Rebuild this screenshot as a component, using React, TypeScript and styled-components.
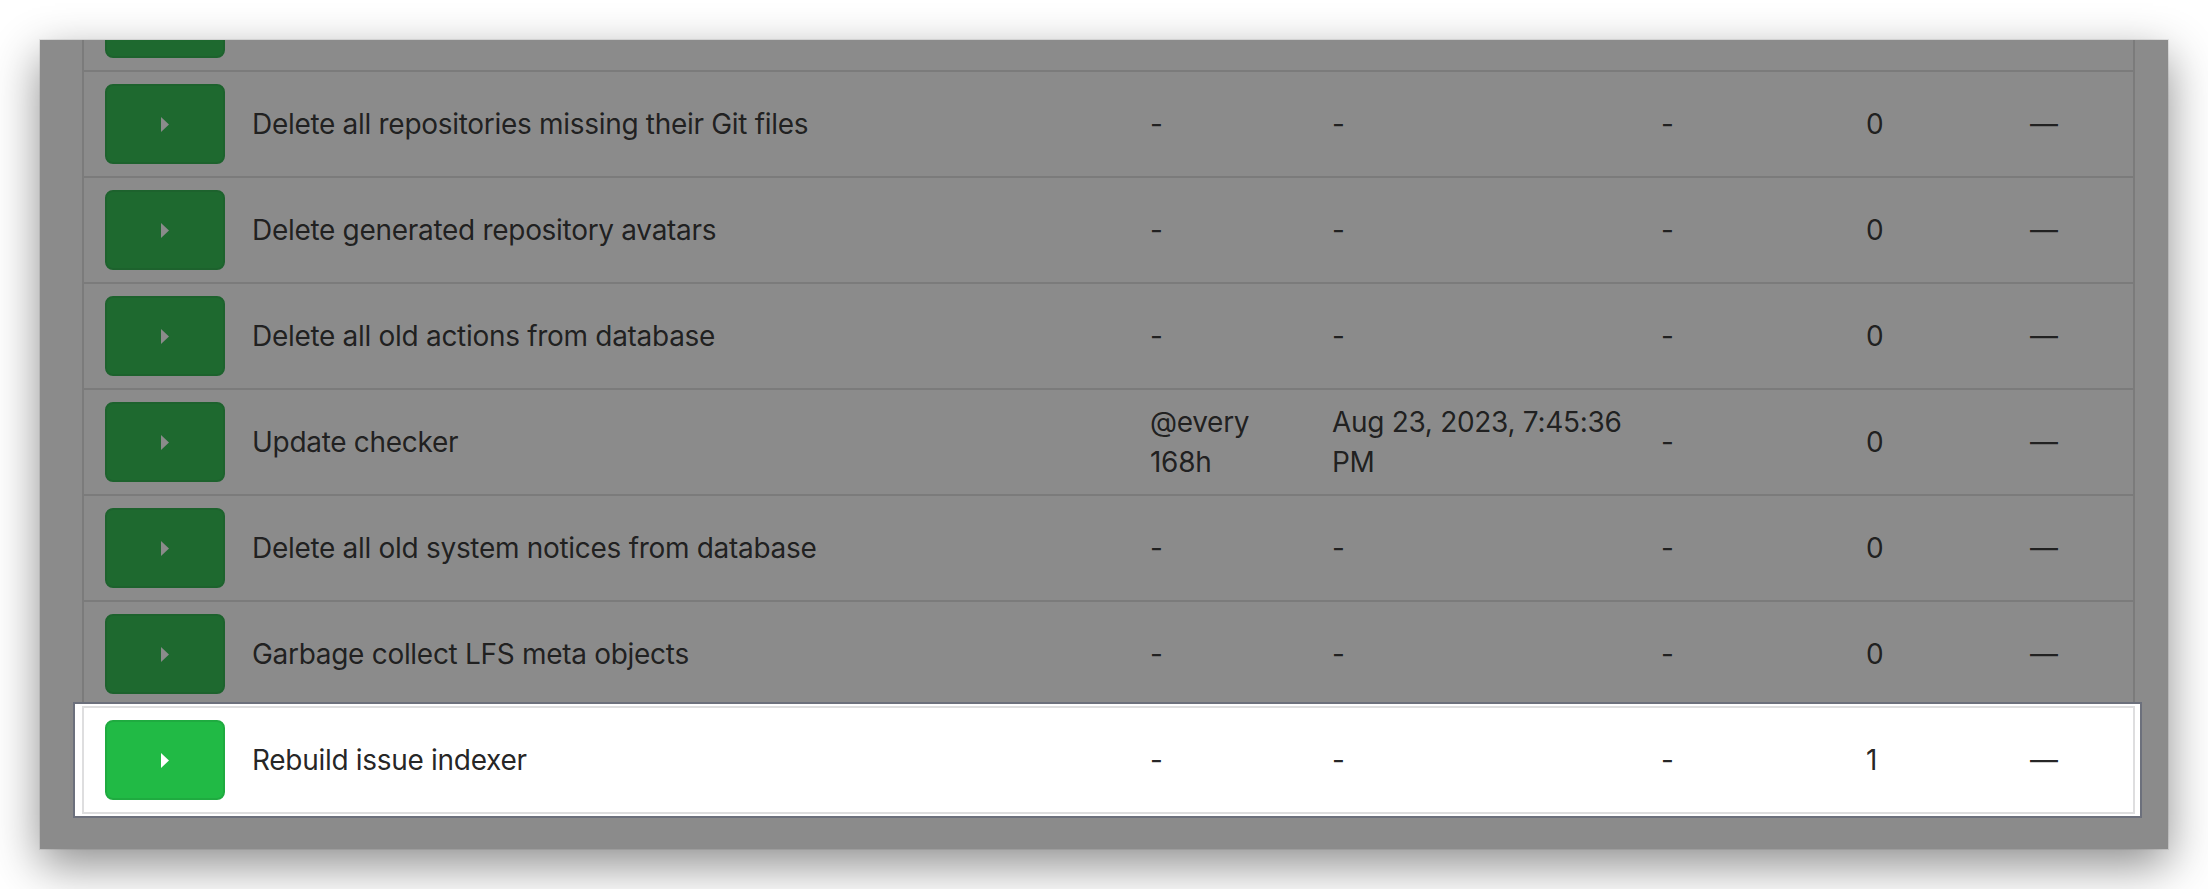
import React from 'react';
import { styled, createGlobalStyle } from 'styled-components';

type Task = {
  name: string;
  schedule: string;
  next: string;
  prev: string;
  execTimes: string;
  last: string;
};

// first row is scrolled mostly out of view, only its button shows
const tasks: Task[] = [
  { name: '', schedule: '', next: '', prev: '', execTimes: '', last: '' },
  { name: 'Delete all repositories missing their Git files', schedule: '-', next: '-', prev: '-', execTimes: '0', last: '—' },
  { name: 'Delete generated repository avatars', schedule: '-', next: '-', prev: '-', execTimes: '0', last: '—' },
  { name: 'Delete all old actions from database', schedule: '-', next: '-', prev: '-', execTimes: '0', last: '—' },
  { name: 'Update checker', schedule: '@every 168h', next: 'Aug 23, 2023, 7:45:36 PM', prev: '-', execTimes: '0', last: '—' },
  { name: 'Delete all old system notices from database', schedule: '-', next: '-', prev: '-', execTimes: '0', last: '—' },
  { name: 'Garbage collect LFS meta objects', schedule: '-', next: '-', prev: '-', execTimes: '0', last: '—' },
];

const highlighted: Task = {
  name: 'Rebuild issue indexer',
  schedule: '-',
  next: '-',
  prev: '-',
  execTimes: '1',
  last: '—',
};

function TaskRow({ task, last }: { task: Task; last?: boolean }) {
  return (
    <Row $last={last}>
      <RunButton type="button" aria-label="Run task">
        <svg width="8" height="15" viewBox="0 0 8 15">
          <polygon points="0,0 8,7.5 0,15" fill="#fff" />
        </svg>
      </RunButton>
      <Cell>{task.name}</Cell>
      <Cell>{task.schedule}</Cell>
      <Cell>{task.next}</Cell>
      <Cell>{task.prev}</Cell>
      <Cell>{task.execTimes}</Cell>
      <Cell>{task.last}</Cell>
    </Row>
  );
}

export default function App() {
  return (
    <>
      <GlobalStyle />
      <Window>
        <Table>
          {tasks.map((task, i) => (
            <TaskRow key={i} task={task} />
          ))}
          <Spotlight>
            <TaskRow task={highlighted} last />
          </Spotlight>
        </Table>
        <Backdrop />
      </Window>
    </>
  );
}

const GlobalStyle = createGlobalStyle`
  html, body {
    margin: 0;
    background: #ffffff;
  }
  body {
    font-family: Inter, "Noto Sans", "Liberation Sans", sans-serif;
    color: rgba(0, 0, 0, 0.87);
  }
`;

const Window = styled.div`
  position: relative;
  margin: 40px;
  height: 809px;
  overflow: hidden;
  background: #ffffff;
  padding: 0 33px 0 42px;
  box-shadow:
    0 16px 44px rgba(0, 0, 0, 0.45),
    0 0 0 1px rgba(0, 0, 0, 0.08);
`;

const Table = styled.div`
  margin-top: -76px;
  display: flex;
  flex-direction: column;
`;

const Row = styled.div<{ $last?: boolean }>`
  display: grid;
  grid-template-columns: 147px 898px 182px 329px 205px 164px 1fr;
  align-items: center;
  padding: 12px 22px 12px 21px;
  background: #ffffff;
  border: 2px solid #dededf;
  border-bottom: ${props => (props.$last ? '2px solid #dededf' : 'none')};
  font-size: 28px;
  line-height: 40px;
  letter-spacing: -0.3px;
  color: rgba(0, 0, 0, 0.87);
`;

const Cell = styled.div`
  padding-right: 22px;
`;

const RunButton = styled.button`
  width: 120px;
  height: 80px;
  display: flex;
  align-items: center;
  justify-content: center;
  padding: 0;
  border: 2px solid #1fab40;
  border-radius: 8px;
  background: #21ba45;
  cursor: pointer;
`;

const Spotlight = styled.div`
  position: relative;
  z-index: 2;
  margin: -4px -7px -4px -9px;
  padding: 2px 5px 2px 7px;
  background: #ffffff;
  border: 2px solid #6c707c;
`;

const Backdrop = styled.div`
  position: absolute;
  inset: 0;
  z-index: 1;
  background: rgba(27, 27, 27, 0.509);
  pointer-events: none;
`;
